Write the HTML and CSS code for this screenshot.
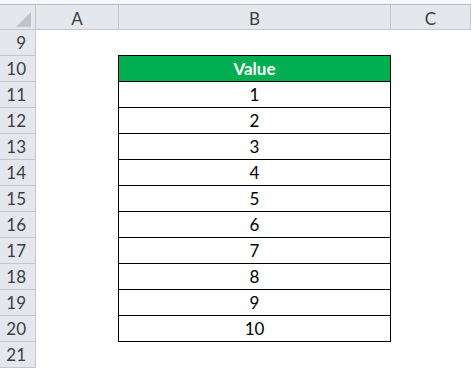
FILE: index.html
```html
<!DOCTYPE html>
<html lang="en">
<head>
  <meta charset="UTF-8">
  <meta name="viewport" content="width=device-width, initial-scale=1.0">
  <title>Sheet</title>
  <link rel="stylesheet" href="styles.css">
</head>
<body>

  <div class="sheet">
    <div class="topbar"></div>

    <div class="row colhead">
      <div class="cell corner"><span class="tri"></span></div>
      <div class="cell">A</div>
      <div class="cell">B</div>
      <div class="cell">C</div>
    </div>

    <div class="row">
      <div class="cell rowhead">9</div>
      <div class="cell"></div>
      <div class="cell above"></div>
      <div class="cell"></div>
    </div>

    <div class="row">
      <div class="cell rowhead">10</div>
      <div class="cell"></div>
      <div class="cell tbl head">Value</div>
      <div class="cell"></div>
    </div>
    <div class="row">
      <div class="cell rowhead">11</div>
      <div class="cell"></div>
      <div class="cell tbl">1</div>
      <div class="cell"></div>
    </div>
    <div class="row">
      <div class="cell rowhead">12</div>
      <div class="cell"></div>
      <div class="cell tbl">2</div>
      <div class="cell"></div>
    </div>
    <div class="row">
      <div class="cell rowhead">13</div>
      <div class="cell"></div>
      <div class="cell tbl">3</div>
      <div class="cell"></div>
    </div>
    <div class="row">
      <div class="cell rowhead">14</div>
      <div class="cell"></div>
      <div class="cell tbl">4</div>
      <div class="cell"></div>
    </div>
    <div class="row">
      <div class="cell rowhead">15</div>
      <div class="cell"></div>
      <div class="cell tbl">5</div>
      <div class="cell"></div>
    </div>
    <div class="row">
      <div class="cell rowhead">16</div>
      <div class="cell"></div>
      <div class="cell tbl">6</div>
      <div class="cell"></div>
    </div>
    <div class="row">
      <div class="cell rowhead">17</div>
      <div class="cell"></div>
      <div class="cell tbl">7</div>
      <div class="cell"></div>
    </div>
    <div class="row">
      <div class="cell rowhead">18</div>
      <div class="cell"></div>
      <div class="cell tbl">8</div>
      <div class="cell"></div>
    </div>
    <div class="row">
      <div class="cell rowhead">19</div>
      <div class="cell"></div>
      <div class="cell tbl">9</div>
      <div class="cell"></div>
    </div>
    <div class="row">
      <div class="cell rowhead">20</div>
      <div class="cell"></div>
      <div class="cell tbl">10</div>
      <div class="cell"></div>
    </div>

    <div class="row">
      <div class="cell rowhead">21</div>
      <div class="cell"></div>
      <div class="cell"></div>
      <div class="cell"></div>
    </div>
  </div>

</body>
</html>
```

FILE: styles.css
```css
body {
  margin: 0;
  padding: 0;
  background: #fff;
  font-family: Lato, "Open Sans", sans-serif;
  font-size: 17px;
  color: #000;
}

.sheet {
  width: 471px;
  overflow: hidden;
}

.topbar {
  height: 4px;
  background: #f6f7f8;
  border-bottom: 1px solid #b9bcc1;
}

.row {
  display: grid;
  grid-template-columns: 36px 83px 272px 80px;
  height: 26px;
}

.cell {
  box-sizing: border-box;
  display: flex;
  align-items: center;
  justify-content: center;
}

.colhead {
  height: 25px;
  background: #e4e7eb;
  color: #3a3f47;
}

.colhead .cell {
  border-right: 1px solid #c3c7cd;
  border-bottom: 1px solid #c3c7cd;
  padding-top: 2px;
}

.corner {
  justify-content: flex-end;
  align-items: flex-end;
  padding: 0 4px 2px 0;
}

.tri {
  width: 0;
  height: 0;
  border-left: 15px solid transparent;
  border-bottom: 15px solid #bfc2c6;
}

.rowhead {
  justify-content: flex-end;
  padding-right: 9px;
  background: #e4e7eb;
  color: #3a3f47;
  border-right: 1px solid #c3c7cd;
  border-bottom: 1px solid #c3c7cd;
}

.above {
  margin-left: -1px;
  border-bottom: 1px solid #000;
}

.tbl {
  margin-left: -1px;
  border-left: 1px solid #000;
  border-right: 1px solid #000;
  border-bottom: 1px solid #000;
}

.head {
  background: #00b050;
  color: #fff;
  font-weight: bold;
}
```
